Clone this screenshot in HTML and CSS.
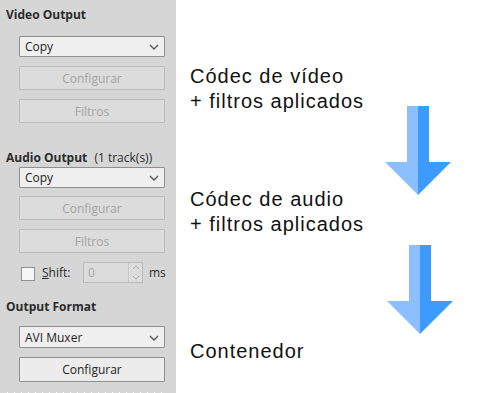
FILE: index.html
```html
<!DOCTYPE html>
<html lang="es">
<head>
  <meta charset="UTF-8" />
  <title>Salida - Avidemux</title>
  <link rel="stylesheet" href="styles.css">
</head>
<body>
  <div class="panel">
    <div class="heading heading-video">Video Output</div>
    <div class="combo combo-first">
      <span>Copy</span>
      <svg class="chevron" width="10" height="6" viewBox="0 0 10 6"><path d="M1 1 L5 5 L9 1" fill="none" stroke="#555" stroke-width="1.3"/></svg>
    </div>
    <button class="btn" disabled>Configurar</button>
    <button class="btn" disabled>Filtros</button>

    <div class="heading heading-audio">Audio Output <span class="tracks">(1 track(s))</span></div>
    <div class="combo combo-audio">
      <span>Copy</span>
      <svg class="chevron" width="10" height="6" viewBox="0 0 10 6"><path d="M1 1 L5 5 L9 1" fill="none" stroke="#555" stroke-width="1.3"/></svg>
    </div>
    <button class="btn btn-audio-cfg" disabled>Configurar</button>
    <button class="btn" disabled>Filtros</button>

    <div class="shift-row">
      <span class="checkbox"></span>
      <span class="shift-label"><u>S</u>hift:</span>
      <div class="spin">
        <span class="spin-value">0</span>
        <span class="spin-arrows">
          <svg width="8" height="5" viewBox="0 0 8 5"><path d="M1 4 L4 1 L7 4" fill="none" stroke="#b0b0b0" stroke-width="1"/></svg>
          <svg width="8" height="5" viewBox="0 0 8 5"><path d="M1 1 L4 4 L7 1" fill="none" stroke="#b0b0b0" stroke-width="1"/></svg>
        </span>
      </div>
      <span class="ms">ms</span>
    </div>

    <div class="heading heading-format">Output Format</div>
    <div class="combo combo-format">
      <span>AVI Muxer</span>
      <svg class="chevron" width="10" height="6" viewBox="0 0 10 6"><path d="M1 1 L5 5 L9 1" fill="none" stroke="#555" stroke-width="1.3"/></svg>
    </div>
    <button class="btn btn-enabled">Configurar</button>
    <div class="dots"></div>
  </div>

  <div class="flow">
    <div class="step step-video">Códec de vídeo<br>+ filtros aplicados</div>
    <svg class="arrow arrow-1" width="66" height="89" viewBox="0 0 66 89">
      <polygon points="22,0 33,0 33,89 0,56 22,56" fill="#8cbfff"/>
      <polygon points="33,0 44,0 44,56 66,56 33,89" fill="#3d9aff"/>
    </svg>
    <div class="step step-audio">Códec de audio<br>+ filtros aplicados</div>
    <svg class="arrow arrow-2" width="66" height="89" viewBox="0 0 66 89">
      <polygon points="22,0 33,0 33,89 0,56 22,56" fill="#8cbfff"/>
      <polygon points="33,0 44,0 44,56 66,56 33,89" fill="#3d9aff"/>
    </svg>
    <div class="step step-container">Contenedor</div>
  </div>
</body>
</html>
```

FILE: styles.css
```css
body {
  margin: 0;
  display: flex;
  height: 393px;
  background: #ffffff;
  overflow: hidden;
}

.panel {
  width: 176px;
  flex-shrink: 0;
  background: #d6d6d6;
  padding: 7px 0 0 0;
  box-sizing: border-box;
  display: flex;
  flex-direction: column;
  font-family: "Open Sans", "Noto Sans", sans-serif;
  font-size: 12px;
  color: #2b2b2b;
}

.heading {
  height: 16px;
  line-height: 16px;
  margin-left: 6px;
  font-weight: bold;
  white-space: nowrap;
}

.heading .tracks {
  font-weight: normal;
  margin-left: 4px;
}

.heading-audio {
  margin-top: 27px;
}

.heading-format {
  margin-top: 16px;
}

.combo {
  margin-left: 19px;
  width: 146px;
  height: 21px;
  box-sizing: border-box;
  border: 1px solid #8f8f8f;
  background: #efefef;
  border-radius: 1px;
  display: flex;
  align-items: center;
  justify-content: space-between;
  padding: 0 5px 0 5px;
  color: #1e1e1e;
}

.combo-first {
  margin-top: 13px;
}

.combo-audio {
  margin-top: 1px;
}

.combo-format {
  margin-top: 11px;
  height: 22px;
}

.chevron {
  margin-top: 1px;
}

.btn {
  margin: 9px 0 0 19px;
  width: 146px;
  height: 24px;
  box-sizing: border-box;
  border: 1px solid #bcbcbc;
  background: #dcdcdc;
  border-radius: 1px;
  color: #a3a3a3;
  font-family: inherit;
  font-size: 12px;
  padding: 0;
}

.btn-audio-cfg {
  margin-top: 8px;
}

.btn-enabled {
  border-color: #8f8f8f;
  background: #ececec;
  color: #222222;
  height: 25px;
}

.shift-row {
  margin: 9px 0 0 21px;
  height: 21px;
  display: flex;
  align-items: center;
}

.checkbox {
  width: 14px;
  height: 14px;
  box-sizing: border-box;
  border: 1px solid #8f8f8f;
  background: #f6f6f6;
  margin-top: 3px;
}

.shift-label {
  margin-left: 7px;
  width: 41px;
}

.spin {
  width: 60px;
  height: 21px;
  box-sizing: border-box;
  border: 1px solid #bababa;
  background: #dcdcdc;
  display: flex;
  align-items: center;
  justify-content: space-between;
  padding-left: 4px;
  color: #a8a8a8;
}

.spin-arrows {
  width: 13px;
  height: 100%;
  border-left: 1px solid #c8c8c8;
  display: flex;
  flex-direction: column;
  align-items: center;
  justify-content: space-around;
}

.ms {
  margin-left: 6px;
}

.dots {
  margin: 10px 0 0 7px;
  width: 158px;
  height: 1px;
  background: repeating-linear-gradient(to right, #ffffff 0 1px, transparent 1px 7px);
}

.flow {
  display: flex;
  flex-direction: column;
  padding: 64px 0 0 14px;
  font-family: "Liberation Sans", Arial, sans-serif;
  font-size: 20px;
  line-height: 25px;
  letter-spacing: 1px;
  color: #111111;
}

.step {
  white-space: nowrap;
}

.arrow {
  display: block;
  flex-shrink: 0;
}

.arrow-1 {
  margin: -8px 0 0 195px;
}

.step-audio {
  margin-top: -8px;
}

.arrow-2 {
  margin: 8px 0 0 197px;
}

.step-container {
  margin-top: 5px;
}
```
